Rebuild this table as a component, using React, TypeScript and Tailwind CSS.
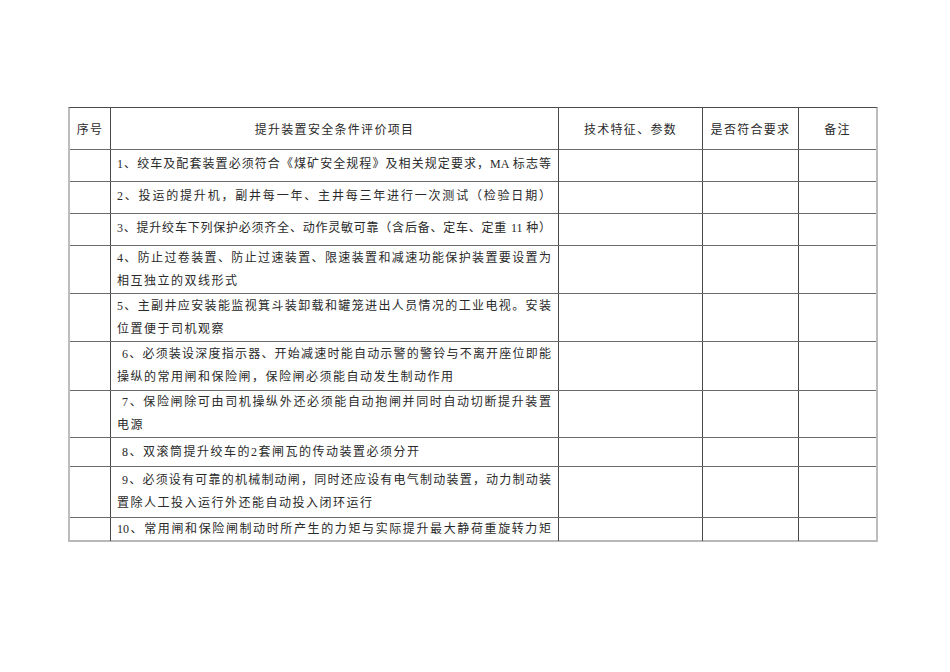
import React from "react";

type Row = { h: string; up?: boolean; lines: { t: string; full?: boolean; indent?: boolean }[] };

const rows: Row[] = [
  { h: "h-[32px]", up: true, lines: [{ t: "1、绞车及配套装置必须符合《煤矿安全规程》及相关规定要求，MA 标志等", full: true }] },
  { h: "h-[32px]", up: true, lines: [{ t: "2、投运的提升机，副井每一年、主井每三年进行一次测试（检验日期）", full: true }] },
  { h: "h-[32px]", up: true, lines: [{ t: "3、提升绞车下列保护必须齐全、动作灵敏可靠（含后备、定车、定重 11 种）", full: true }] },
  {
    h: "h-[48px]",
    lines: [
      { t: "4、防止过卷装置、防止过速装置、限速装置和减速功能保护装置要设置为", full: true },
      { t: "相互独立的双线形式" },
    ],
  },
  {
    h: "h-[48px]",
    lines: [
      { t: "5、主副井应安装能监视箕斗装卸载和罐笼进出人员情况的工业电视。安装", full: true },
      { t: "位置便于司机观察" },
    ],
  },
  {
    h: "h-[49px]",
    lines: [
      { t: "6、必须装设深度指示器、开始减速时能自动示警的警铃与不离开座位即能", full: true, indent: true },
      { t: "操纵的常用闸和保险闸，保险闸必须能自动发生制动作用" },
    ],
  },
  {
    h: "h-[47px]",
    lines: [
      { t: "7、保险闸除可由司机操纵外还必须能自动抱闸并同时自动切断提升装置", full: true, indent: true },
      { t: "电源" },
    ],
  },
  { h: "h-[29px]", lines: [{ t: "8、双滚筒提升绞车的2套闸瓦的传动装置必须分开", indent: true }] },
  {
    h: "h-[51px]",
    lines: [
      { t: "9、必须设有可靠的机械制动闸，同时还应设有电气制动装置，动力制动装", full: true, indent: true },
      { t: "置除人工投入运行外还能自动投入闭环运行" },
    ],
  },
  { h: "h-[22px]", lines: [{ t: "10、常用闸和保险闸制动时所产生的力矩与实际提升最大静荷重旋转力矩", full: true }] },
];

const grid = "grid grid-cols-[41px_448px_144px_96px_77px]";
const cell = "border-r border-[#4a4a4a]";

export default function App() {
  return (
    <div
      className="w-[950px] h-[672px] bg-white text-[#2a2a2a] overflow-hidden"
      style={{ fontFamily: '"Liberation Serif", "Noto Sans CJK SC", serif' }}
    >
      <div className="ml-[68px] pt-[107px]">
        <div className="w-[810px] border-t border-t-[#4a4a4a] border-l-2 border-r-2 border-b-2 border-l-[#bdbdbd] border-r-[#bdbdbd] border-b-[#b8b8b8]">
          <div className={`${grid} h-[42px] border-b border-[#6a6a6a] text-[12px] leading-[23px]`}>
            <div className={`${cell} flex items-center justify-center tracking-[1.3px] pt-[3px]`}>序号</div>
            <div className={`${cell} flex items-center justify-center tracking-[1.3px] pt-[3px]`}>提升装置安全条件评价项目</div>
            <div className={`${cell} flex items-center justify-center tracking-[1.3px] pt-[3px]`}>技术特征、参数</div>
            <div className={`${cell} flex items-center justify-center tracking-[1.3px] pt-[3px]`}>是否符合要求</div>
            <div className="flex items-center justify-center tracking-[1.3px] pt-[3px]">备注</div>
          </div>
          {rows.map((r, i) => (
            <div
              key={i}
              className={`${grid} ${r.h} ${i < rows.length - 1 ? "border-b border-[#6a6a6a]" : ""} text-[12px] leading-[23px]`}
            >
              <div className={cell}></div>
              <div className={`${cell} flex flex-col justify-center pl-[6px] pr-[7px] ${r.up ? "-mt-[2px]" : ""}`}>
                {r.lines.map((l, j) => (
                  <div
                    key={j}
                    className={
                      l.full
                        ? `whitespace-nowrap text-justify [text-align-last:justify] ${l.indent ? "pl-[5px]" : ""}`
                        : `whitespace-nowrap tracking-[1.5px] ${l.indent ? "pl-[5px]" : ""}`
                    }
                  >
                    {l.t}
                  </div>
                ))}
              </div>
              <div className={cell}></div>
              <div className={cell}></div>
              <div></div>
            </div>
          ))}
        </div>
      </div>
    </div>
  );
}
